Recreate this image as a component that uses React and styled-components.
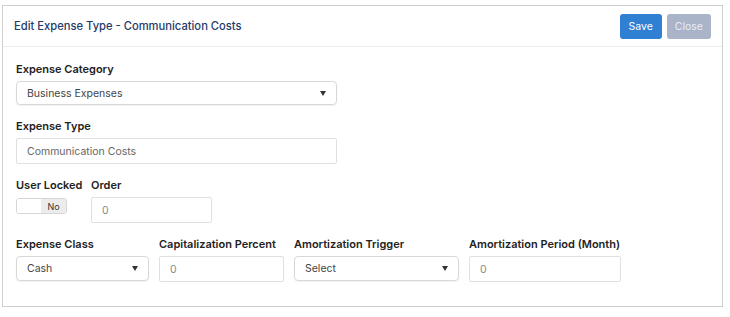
import React from "react";
import styled, { createGlobalStyle } from "styled-components";

const GlobalStyle = createGlobalStyle`
  body {
    margin: 0;
    background: #ffffff;
    font-family: Inter, "Noto Sans", sans-serif;
  }
`;

const Card = styled.div`
  margin: 5px 0 0 2px;
  width: 719px;
  border: 1px solid #cfcfcf;
  background: #fff;
`;

const Header = styled.div`
  display: flex;
  align-items: center;
  justify-content: space-between;
  height: 40px;
  padding: 0 11px;
  border-bottom: 1px solid #ececec;
`;

const Title = styled.span`
  font-size: 11.2px;
  font-weight: 500;
  color: #1f3b6b;
`;

const Actions = styled.div`
  display: flex;
  gap: 5px;
`;

const Button = styled.button`
  height: 25px;
  padding: 0 ${(p) => p.$pad || 8}px;
  border: none;
  border-radius: 3px;
  font-family: Inter, sans-serif;
  font-size: 10.5px;
  color: ${(p) => (p.$muted ? "#e9edf4" : "#fff")};
  background: ${(p) => (p.$muted ? "#aab4c8" : "#2f80d2")};
`;

const Body = styled.div`
  padding: 15px 13px 24px;
  display: flex;
  flex-direction: column;
  gap: 14px;
`;

const Row = styled.div`
  display: flex;
  gap: ${(p) => p.$gap || 10}px;
  align-items: flex-start;
`;

const Field = styled.div`
  display: flex;
  flex-direction: column;
  gap: 5px;
  width: ${(p) => (p.$w ? `${p.$w}px` : "auto")};
`;

const Label = styled.label`
  font-size: 11px;
  font-weight: 600;
  color: #222;
  line-height: 14px;
  white-space: nowrap;
`;

const SelectBox = styled.div`
  display: flex;
  align-items: center;
  justify-content: space-between;
  height: ${(p) => p.$h || 25}px;
  padding: 0 10px;
  border: 1px solid #d8d8d8;
  border-radius: 4px;
  box-shadow: 0 1px 2px rgba(0, 0, 0, 0.06);
  font-size: 10.5px;
  color: #444;
  box-sizing: border-box;
`;

const Caret = styled.span`
  width: 0;
  height: 0;
  border-left: 3.5px solid transparent;
  border-right: 3.5px solid transparent;
  border-top: 5px solid #333;
`;

const TextBox = styled.div`
  display: flex;
  align-items: center;
  height: 26px;
  padding: 0 10px;
  border: 1px solid #e0e0e0;
  border-radius: 2px;
  font-size: 10.5px;
  color: ${(p) => (p.$dim ? "#8a8a8a" : "#666")};
  box-sizing: border-box;
`;

const Toggle = styled.div`
  display: flex;
  width: 51px;
  height: 16px;
  border: 1px solid #d6d6d6;
  border-radius: 3px;
  overflow: hidden;
  box-sizing: border-box;
  margin-top: 1px;
`;

const ToggleOff = styled.span`
  flex: 1;
  background: #fff;
`;

const ToggleLabel = styled.span`
  width: 25px;
  display: flex;
  align-items: center;
  justify-content: center;
  background: #ececec;
  font-size: 9px;
  color: #333;
`;

export default function App() {
  return (
    <>
      <GlobalStyle />
      <Card>
        <Header>
          <Title>Edit Expense Type - Communication Costs</Title>
          <Actions>
            <Button $pad={9}>Save</Button>
            <Button $muted>Close</Button>
          </Actions>
        </Header>
        <Body>
          <Field $w={321}>
            <Label>Expense Category</Label>
            <SelectBox $h={24}>
              Business Expenses
              <Caret />
            </SelectBox>
          </Field>
          <Field $w={321}>
            <Label>Expense Type</Label>
            <TextBox>Communication Costs</TextBox>
          </Field>
          <Row $gap={24}>
            <Field $w={51}>
              <Label>User Locked</Label>
              <Toggle>
                <ToggleOff />
                <ToggleLabel>No</ToggleLabel>
              </Toggle>
            </Field>
            <Field $w={121}>
              <Label>Order</Label>
              <TextBox $dim>0</TextBox>
            </Field>
          </Row>
          <Row $gap={10}>
            <Field $w={133}>
              <Label>Expense Class</Label>
              <SelectBox>
                Cash
                <Caret />
              </SelectBox>
            </Field>
            <Field $w={125}>
              <Label>Capitalization Percent</Label>
              <TextBox $dim>0</TextBox>
            </Field>
            <Field $w={165}>
              <Label>Amortization Trigger</Label>
              <SelectBox>
                Select
                <Caret />
              </SelectBox>
            </Field>
            <Field $w={152}>
              <Label>Amortization Period (Month)</Label>
              <TextBox $dim>0</TextBox>
            </Field>
          </Row>
        </Body>
      </Card>
    </>
  );
}
